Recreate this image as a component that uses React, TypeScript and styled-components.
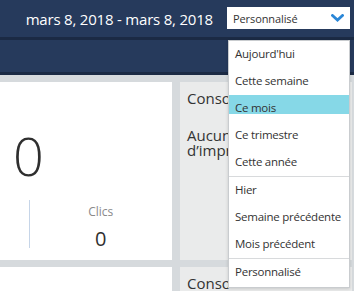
import React from 'react';
import styled, { createGlobalStyle } from 'styled-components';

const GlobalStyle = createGlobalStyle`
  html, body {
    margin: 0;
    padding: 0;
    background: #d6dadd;
    overflow: hidden;
    font-family: "Open Sans", "Noto Sans", sans-serif;
  }
`;

const Page = styled.div`
  width: 354px;
  height: 291px;
  overflow: hidden;
`;

const TopBar = styled.header`
  height: 37px;
  background: #263a5c;
  border-bottom: 3px solid #1b2a44;
  display: flex;
  align-items: center;
  justify-content: flex-end;
  gap: 14px;
  padding-right: 4px;
`;

const DateRange = styled.span`
  color: #ffffff;
  font-size: 15px;
  letter-spacing: -0.2px;
`;

const SelectWrap = styled.div`
  position: relative;
  margin-top: -1px;
`;

const SelectBox = styled.div`
  width: 123px;
  height: 22px;
  box-sizing: border-box;
  background: #ffffff;
  display: flex;
  align-items: center;
  justify-content: space-between;
  padding: 0 6px 0 6px;
  font-size: 11px;
  letter-spacing: -0.1px;
  color: #333;
`;

const Menu = styled.ul`
  position: absolute;
  top: 33px;
  left: 1px;
  width: 122px;
  box-sizing: border-box;
  margin: 0;
  padding: 0;
  list-style: none;
  background: #ffffff;
  border: 1px solid #c9cccf;
  box-shadow: 0 1px 3px rgba(0, 0, 0, 0.15);
  z-index: 10;
`;

const MenuItem = styled.li<{ $active?: boolean; $tall?: boolean }>`
  height: ${p => (p.$tall ? 28 : 27)}px;
  box-sizing: border-box;
  padding: ${p => (p.$active ? 4 : 4)}px 0 0 6px;
  font-size: 11.5px;
  letter-spacing: -0.25px;
  line-height: 17px;
  white-space: nowrap;
  color: #333;
  background: ${p =>
    p.$active ? 'linear-gradient(#86d8e7, #86d8e7) top / 100% 19px no-repeat' : 'transparent'};
`;

const Divider = styled.li`
  height: 1px;
  background: #d8dadc;
`;

const SubBar = styled.div`
  height: 32px;
  background: #263a5c;
  border-bottom: 3px solid #1b2a44;
`;

const Grid = styled.main`
  display: grid;
  grid-template-columns: 287px 172px;
  grid-auto-rows: 178px;
  column-gap: 8px;
  row-gap: 7px;
  padding-top: 7px;
  margin-left: -115px;
`;

const Card = styled.section<{ $tone?: 'white' | 'grey' }>`
  background: ${p => (p.$tone === 'grey' ? '#eaebeb' : '#ffffff')};
  overflow: hidden;
  box-sizing: border-box;
`;

const Summary = styled(Card)`
  display: flex;
  flex-direction: column;
  align-items: stretch;
`;

const BigNumber = styled.div`
  text-align: center;
  font-size: 54px;
  font-weight: 300;
  line-height: 54px;
  color: #2f2f2f;
  margin-top: 46px;
`;

const Stats = styled.div`
  display: grid;
  grid-template-columns: 1fr 1fr;
  margin-top: 18px;
`;

const Stat = styled.div<{ $divided?: boolean }>`
  height: 48px;
  display: flex;
  flex-direction: column;
  align-items: center;
  border-left: ${p => (p.$divided ? '1px solid #c6d5e8' : 'none')};
`;

const StatLabel = styled.span`
  font-size: 12px;
  color: #8a8a8a;
  margin-top: 3px;
`;

const StatValue = styled.span`
  font-size: 20px;
  color: #2f2f2f;
  margin-top: 5px;
`;

const Panel = styled(Card)`
  padding: 6px 0 0 7px;
`;

const PanelTitle = styled.div`
  font-size: 15px;
  color: #333;
  white-space: nowrap;
`;

const PanelText = styled.div`
  font-size: 15px;
  line-height: 15px;
  color: #333;
  margin-top: 20px;
  width: 150px;
`;

const Chevron = () => (
  <svg width="13" height="8" viewBox="0 0 13 8">
    <polyline points="1.5,1.5 6.5,6 11.5,1.5" fill="none" stroke="#2b87d7" strokeWidth="2.8" strokeLinecap="square" />
  </svg>
);

const ranges: Array<string | null> = [
  "Aujourd'hui",
  'Cette semaine',
  'Ce mois',
  'Ce trimestre',
  'Cette année',
  null,
  'Hier',
  'Semaine précédente',
  'Mois précédent',
  null,
  'Personnalisé',
];

export default function App() {
  return (
    <Page>
      <GlobalStyle />
      <TopBar>
        <DateRange>mars 8, 2018 - mars 8, 2018</DateRange>
        <SelectWrap>
          <SelectBox>
            <span>Personnalisé</span>
            <Chevron />
          </SelectBox>
          <Menu>
            {ranges.map((r, i) =>
              r === null ? (
                <Divider key={i} />
              ) : (
                <MenuItem key={i} $active={r === 'Ce mois'} $tall={r === 'Personnalisé'}>
                  {r}
                </MenuItem>
              )
            )}
          </Menu>
        </SelectWrap>
      </TopBar>
      <SubBar />
      <Grid>
        <Summary>
          <BigNumber>0</BigNumber>
          <Stats>
            <Stat />
            <Stat $divided>
              <StatLabel>Clics</StatLabel>
              <StatValue>0</StatValue>
            </Stat>
          </Stats>
        </Summary>
        <Panel $tone="grey">
          <PanelTitle>Conso</PanelTitle>
          <PanelText>Aucune donnée d’impr</PanelText>
        </Panel>
        <Summary />
        <Panel $tone="grey">
          <PanelTitle>Conso</PanelTitle>
        </Panel>
      </Grid>
    </Page>
  );
}
